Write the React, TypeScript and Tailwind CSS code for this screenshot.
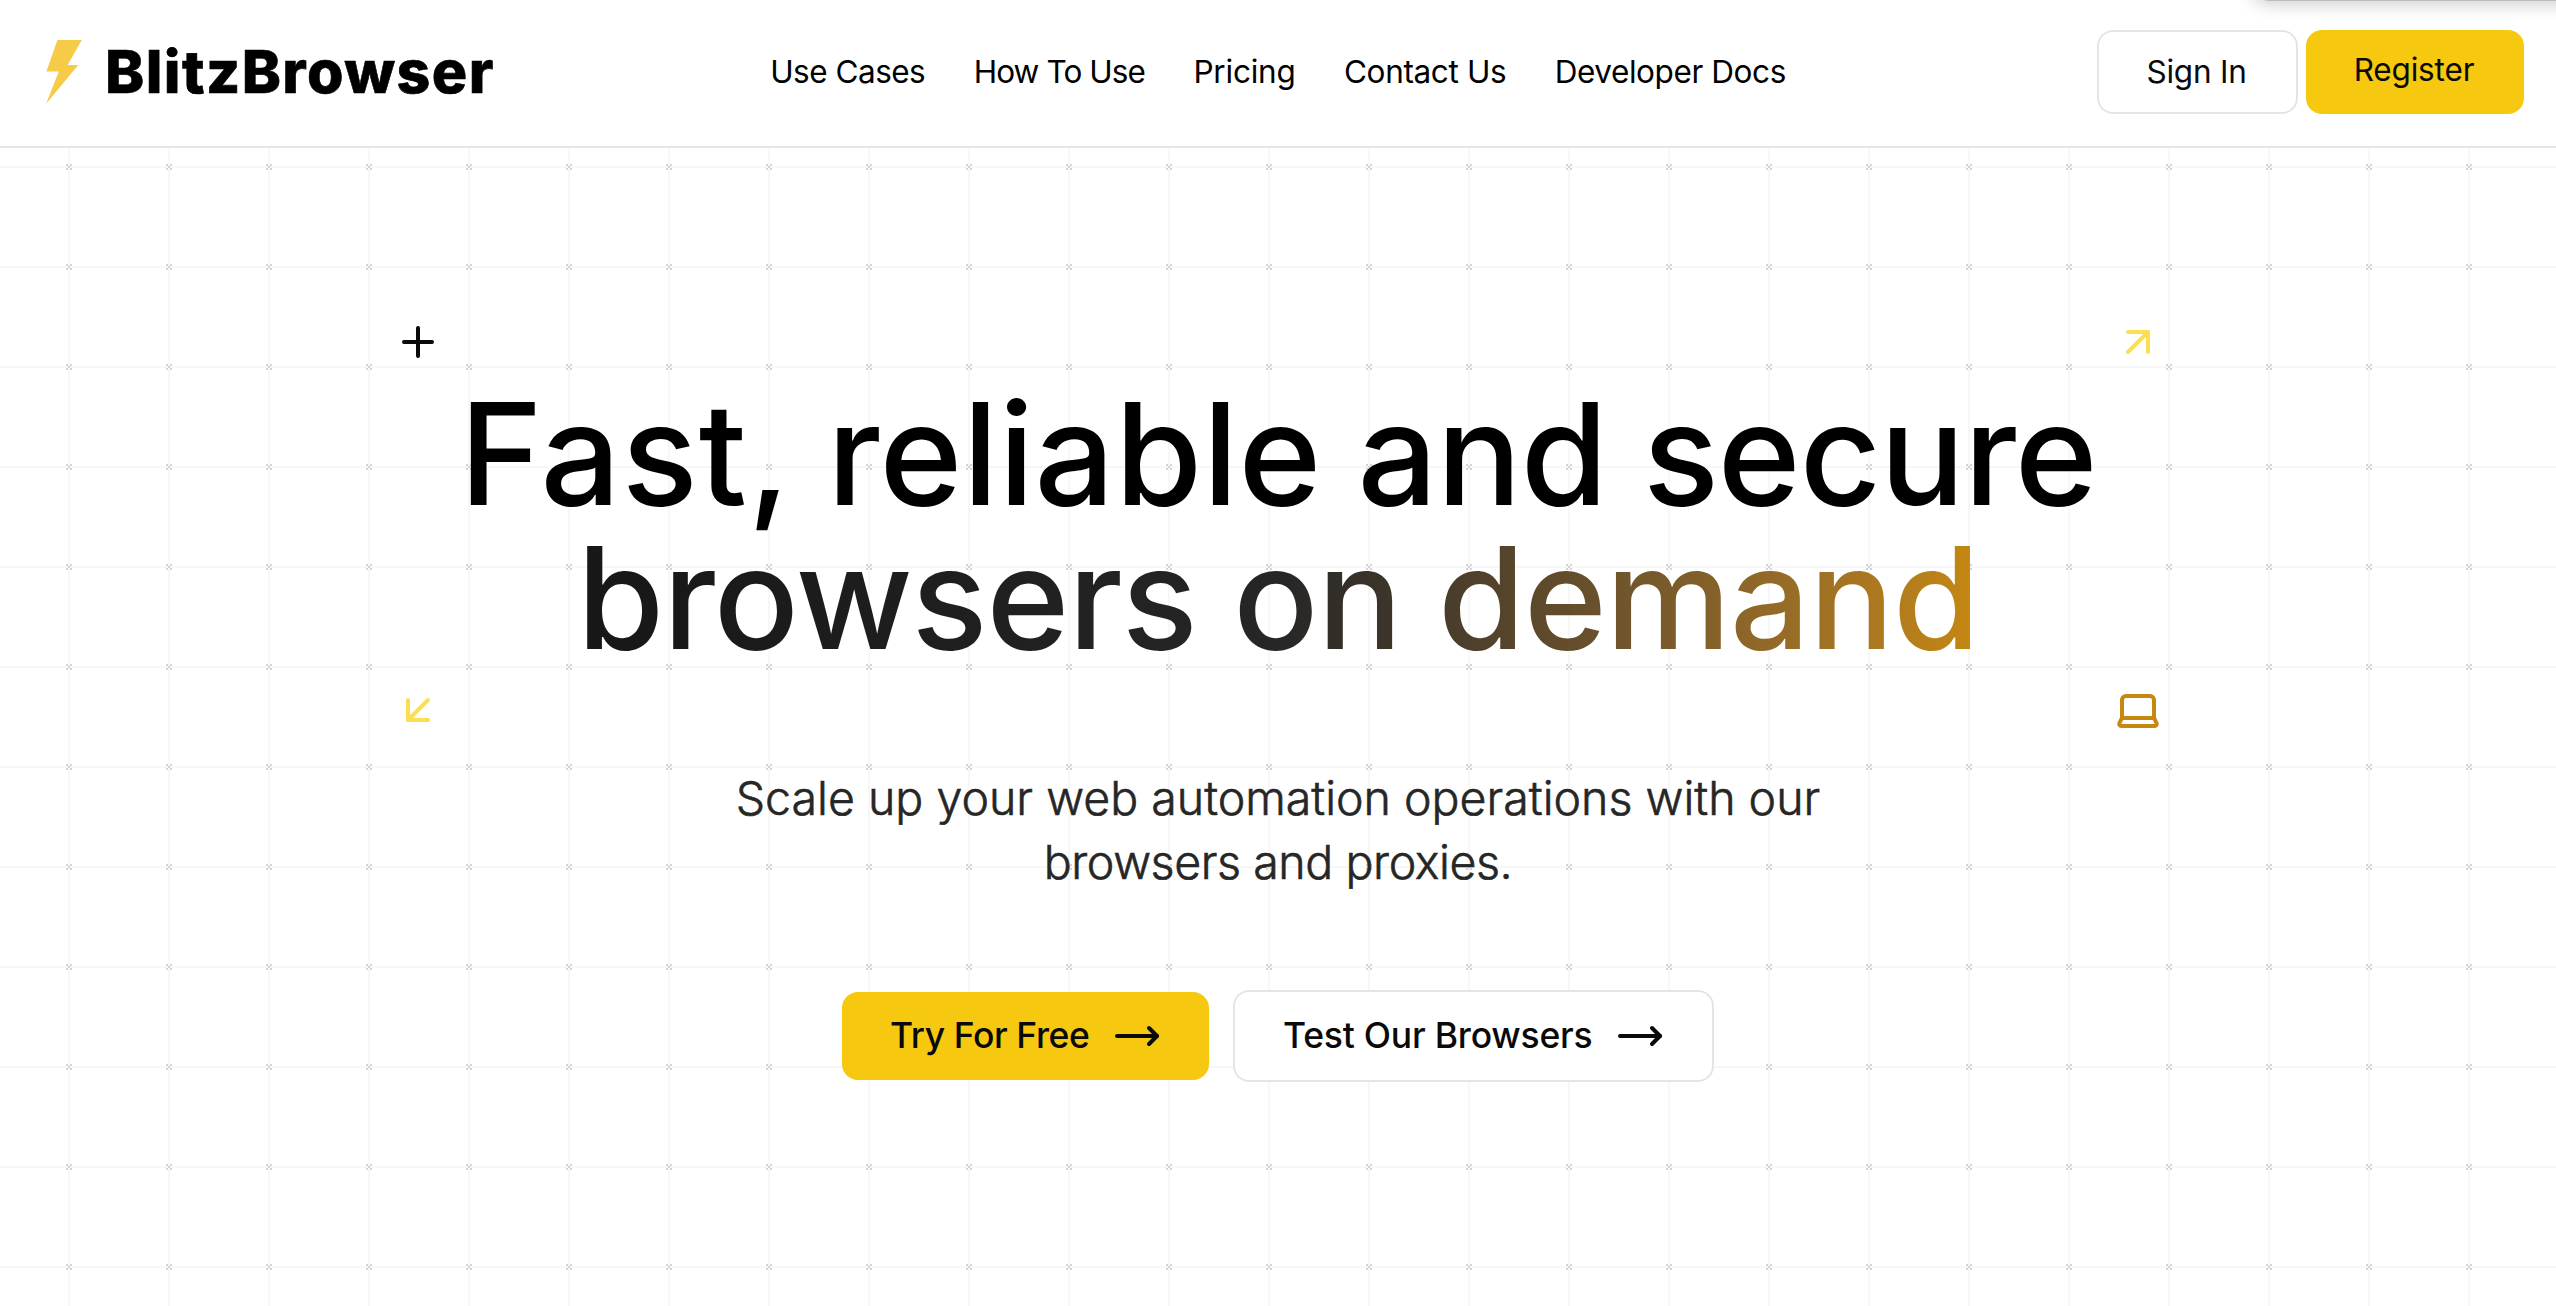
import React from 'react';
import { ArrowDownLeft, ArrowUpRight, Laptop, MoveRight, Plus } from 'lucide-react';

interface NavItem {
  label: string;
  className: string;
}

const navItems: NavItem[] = [
  { label: 'Use Cases', className: 'tracking-[-0.5px]' },
  { label: 'How To Use', className: 'tracking-[-0.9px]' },
  { label: 'Pricing', className: 'tracking-[-0.22px]' },
  { label: 'Contact Us', className: 'tracking-[-0.36px]' },
  { label: 'Developer Docs', className: 'tracking-[-0.42px]' },
];

function Logo() {
  return (
    <a href="#" className="flex items-center gap-[23px]">
      <svg width="36" height="64" viewBox="0 0 36 64" fill="#f6cb48">
        <polygon points="11.4,0 35.8,0 21.6,25 32.2,25 0,64 12.8,31.4 0.4,31.4" />
      </svg>
      <span className="pb-0.5 text-[59px] leading-none font-extrabold tracking-[1.45px] text-black [-webkit-text-stroke:0.6px_black]">
        BlitzBrowser
      </span>
    </a>
  );
}

function Header() {
  return (
    <header className="grid h-[148px] grid-cols-[1fr_auto_1fr] items-center border-b-2 border-neutral-200 bg-white pr-8 pb-0.5 pl-[46px]">
      <Logo />
      {/* side paddings differ, the nudge keeps the nav in the middle of the page */}
      <nav className="-ml-3.5 flex items-center gap-[48.4px] text-[31.5px] text-black">
        {navItems.map((item) => (
          <a key={item.label} href="#" className={item.className}>
            {item.label}
          </a>
        ))}
      </nav>
      <div className="flex items-center justify-end gap-2 text-[31.5px] text-neutral-950">
        <button className="h-[84px] w-[201px] rounded-2xl border-2 border-neutral-200 bg-white pr-0.5 tracking-[-0.23px]">
          Sign In
        </button>
        <button className="h-[84px] w-[218px] rounded-2xl bg-[#f6c810] pr-0.5 pb-1 tracking-[-0.16px]">
          Register
        </button>
      </div>
    </header>
  );
}

function GridBackground() {
  return (
    <svg className="absolute inset-0 h-full w-full" aria-hidden="true">
      <defs>
        <pattern id="grid" x="19" y="-31" width="100" height="100" patternUnits="userSpaceOnUse">
          <path d="M50 0V100M0 50H100" stroke="#f7f7f7" strokeWidth="2" />
          <g fill="#d4d4d4">
            <rect x="47" y="47" width="2" height="2" />
            <rect x="51" y="47" width="2" height="2" />
            <rect x="49" y="49" width="2" height="2" />
            <rect x="47" y="51" width="2" height="2" />
            <rect x="51" y="51" width="2" height="2" />
          </g>
        </pattern>
      </defs>
      <rect width="100%" height="100%" fill="url(#grid)" />
    </svg>
  );
}

function Hero() {
  return (
    <section className="relative flex-1 overflow-hidden">
      <GridBackground />
      <div className="relative flex flex-col items-center pt-[170px]">
        <div className="w-[1768px]">
          <div className="flex justify-between">
            <Plus size={48} className="text-neutral-950" />
            <ArrowUpRight size={48} className="text-[#fcdf50]" />
          </div>
          <h1 className="flex flex-col items-center py-4 text-[141px] leading-[144px] font-medium text-black">
            <span className="[word-spacing:-2px]">
              <span className="tracking-[1.1px]">Fast,</span> <span className="tracking-[0.4px]">reliable</span>{' '}
              <span className="tracking-[-0.7px]">and</span> <span className="tracking-[-1px]">secure</span>
            </span>
            <span className="bg-linear-to-r from-[#171717] via-[#262626] to-[#c6880f] bg-clip-text tracking-[-1.01px] text-transparent">
              browsers on demand
            </span>
          </h1>
          <div className="flex justify-between">
            <ArrowDownLeft size={48} className="text-[#fcdf50]" />
            <Laptop size={48} className="text-[#c6880f]" />
          </div>
        </div>
        <p className="mt-8 text-center text-[46.5px] leading-[64px] font-light text-neutral-800 [-webkit-text-stroke:0.6px_#262626]">
          Scale up your web automation operations with our
          <br />
          <span className="tracking-[-0.42px]">browsers and proxies.</span>
        </p>
        <div className="mt-24 flex items-center gap-6 text-[35.5px] font-medium text-neutral-950">
          <button className="flex h-[88px] w-[367px] items-center justify-between rounded-2xl bg-[#f6c810] px-12">
            <span className="tracking-[-0.41px]">Try For Free</span>
            <MoveRight size={48} />
          </button>
          <button className="flex h-[92px] w-[481px] items-center justify-between rounded-2xl border-2 border-neutral-200 bg-white px-12">
            <span className="tracking-[-0.22px]">Test Our Browsers</span>
            <MoveRight size={48} />
          </button>
        </div>
      </div>
    </section>
  );
}

export default function App() {
  return (
    <div className="relative flex h-[1306px] w-full flex-col overflow-hidden bg-white font-[Inter,sans-serif]">
      <Header />
      <Hero />
      {/* shadow cast by a panel just above the top edge */}
      <div className="absolute -top-20 -right-10 h-20 w-[346px] rounded-bl-[20px] shadow-[0_0_0_1px_rgba(0,0,0,0.16),0_4px_18px_rgba(0,0,0,0.2)]" />
    </div>
  );
}
